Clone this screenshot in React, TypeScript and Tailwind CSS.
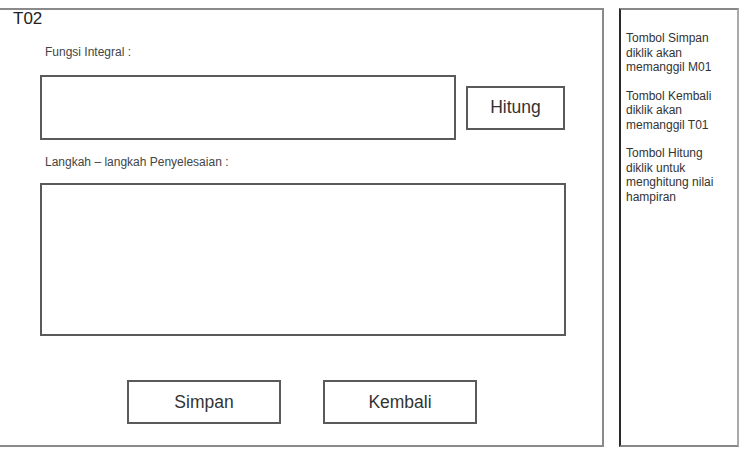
export default function App() {
  const notes = [
    ["Tombol Simpan", "diklik akan", "memanggil M01"],
    ["Tombol Kembali", "diklik akan", "memanggil T01"],
    ["Tombol Hitung", "diklik untuk", "menghitung nilai", "hampiran"],
  ];

  return (
    <div className="flex h-[458px] w-[742px] bg-white pt-[8px] font-['Liberation_Sans',Arial,sans-serif] text-[#333]">
      {/* main form frame, left edge runs off the page */}
      <div className="h-[439px] w-[604px] border-2 border-l-0 border-[#8a8a8a]">
        <div className="ml-[13px] text-[17px] leading-[18px] text-[#222]">T02</div>

        <div className="ml-[45px] mt-[17px] text-[12px] leading-[14px] text-[#444]">Fungsi Integral :</div>

        <div className="ml-[40px] mt-[16px] flex items-center">
          <div className="h-[65px] w-[416px] border-2 border-[#5a5a5a]" />
          <button className="ml-[10px] h-[44px] w-[99px] border-2 border-[#5a5a5a] text-[17.5px] text-[#333]">
            Hitung
          </button>
        </div>

        <div className="ml-[45px] mt-[15px] text-[12px] leading-[14px] text-[#444]">
          Langkah – langkah Penyelesaian :
        </div>

        <div className="ml-[40px] mt-[14px] h-[153px] w-[526px] border-2 border-[#5a5a5a]" />

        <div className="ml-[127px] mt-[44px] flex gap-[42px]">
          <button className="h-[44px] w-[154px] border-2 border-[#5a5a5a] text-[17.5px] text-[#333]">Simpan</button>
          <button className="h-[44px] w-[154px] border-2 border-[#5a5a5a] text-[17.5px] text-[#333]">Kembali</button>
        </div>
      </div>

      {/* side notes */}
      <div className="ml-[15px] h-[439px] w-[120px] border-2 border-[#888] border-l-[#2a2a2a] border-r-[#aaa] pl-[5px] pt-[21px] text-[12px] leading-[14.5px]">
        {notes.map((lines, i) => (
          <div key={i} className="mb-[14px]">
            {lines.map((l) => (
              <div key={l}>{l}</div>
            ))}
          </div>
        ))}
      </div>
    </div>
  );
}
